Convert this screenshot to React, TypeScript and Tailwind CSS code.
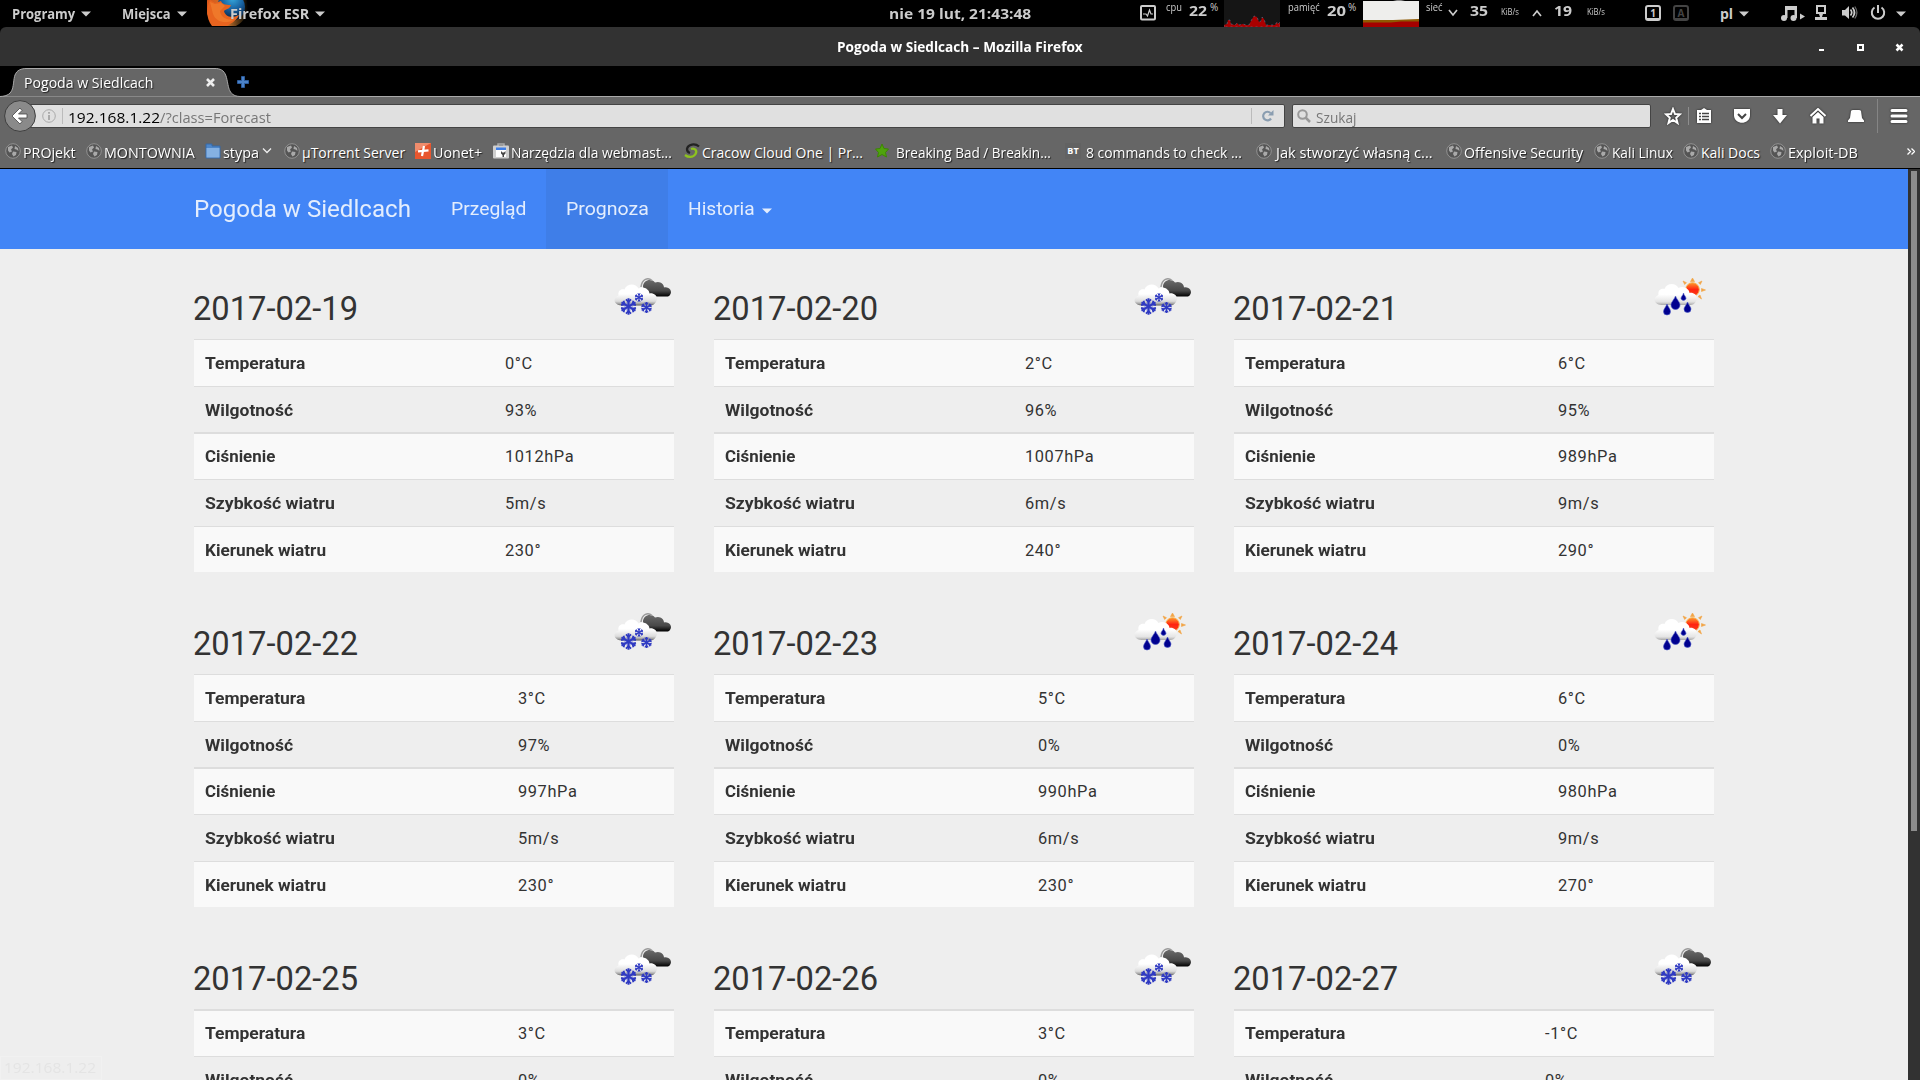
import React from "react";

const ui = "font-['Open_Sans',sans-serif]";

type Kind = "snow" | "rain";
type Day = { date: string; kind: Kind; split: string; values: string[] };

/* Row captions with their drawn widths in pixels. */
const labels: [string, number][] = [
  ["Temperatura", 100],
  ["Wilgotność", 88.5],
  ["Ciśnienie", 70],
  ["Szybkość wiatru", 130],
  ["Kierunek wiatru", 121.5],
];

const days: Day[] = [
  { date: "2017-02-19", kind: "snow", split: "w-[311px]", values: ["0°C", "93%", "1012hPa", "5m/s", "230°"] },
  { date: "2017-02-20", kind: "snow", split: "w-[311px]", values: ["2°C", "96%", "1007hPa", "6m/s", "240°"] },
  { date: "2017-02-21", kind: "rain", split: "w-[324px]", values: ["6°C", "95%", "989hPa", "9m/s", "290°"] },
  { date: "2017-02-22", kind: "snow", split: "w-[324px]", values: ["3°C", "97%", "997hPa", "5m/s", "230°"] },
  { date: "2017-02-23", kind: "rain", split: "w-[324px]", values: ["5°C", "0%", "990hPa", "6m/s", "230°"] },
  { date: "2017-02-24", kind: "rain", split: "w-[324px]", values: ["6°C", "0%", "980hPa", "9m/s", "270°"] },
  { date: "2017-02-25", kind: "snow", split: "w-[324px]", values: ["3°C", "0%"] },
  { date: "2017-02-26", kind: "snow", split: "w-[324px]", values: ["3°C", "0%"] },
  { date: "2017-02-27", kind: "snow", split: "w-[311px]", values: ["-1°C", "0%"] },
];

/* Scales a run of text horizontally so that it occupies exactly `width` pixels. */
function Fit({ width, children, className = "" }: { width: number; children: string; className?: string }) {
  const ref = React.useRef<HTMLSpanElement>(null);
  const [scale, setScale] = React.useState(1);
  React.useLayoutEffect(() => {
    if (ref.current) setScale(width / ref.current.offsetWidth);
  }, [width]);
  return (
    <span className={`inline-block shrink-0 whitespace-nowrap ${className}`} style={{ width }}>
      <span ref={ref} className="inline-block origin-left" style={{ transform: `scaleX(${scale})` }}>{children}</span>
    </span>
  );
}

function Caret({ className = "" }: { className?: string }) {
  return (
    <svg width="10" height="6" viewBox="0 0 10 6" className={className}>
      <path d="M0 0.5h10L5 5.5z" fill="currentColor" />
    </svg>
  );
}

function Flake({ x, y, s }: { x: number; y: number; s: number }) {
  return (
    <g transform={`translate(${x} ${y}) scale(${s})`} stroke="#2f3ac2" fill="none">
      <circle r="4.500" fill="#8f96e0" stroke="none" opacity="0.6" />
      <path d="M0-8V8M-6.900-4L6.900 4M-6.900 4L6.900-4" strokeWidth="2" />
      <path d="M-2.500-7L0-4.500 2.500-7M-2.500 7L0 4.500 2.500 7M-7.300-1.300L-3.900-2.200-4.800-5.600M7.300-1.300L3.900-2.200 4.800-5.600M-7.300 1.300L-3.900 2.200-4.800 5.600M7.300 1.300L3.900 2.200 4.800 5.600" strokeWidth="1.800" />
    </g>
  );
}

function WeatherIcon({ kind }: { kind: Kind }) {
  const cloud = "M8 24C1 24-2 17 5 14C4 9 8 7 11 8C13 2 22 1 25 7C30 4 36 8 36 12C41 11 46 16 42 21C41 23 39 24 37 24Z";
  return (
    <svg width="60" height="40" viewBox="0 0 60 40">
      <defs>
        <linearGradient id="white-cloud" x1="0" y1="0" x2="0" y2="1">
          <stop offset="0.45" stopColor="#fff" />
          <stop offset="0.8" stopColor="#dcdcdc" />
          <stop offset="0.93" stopColor="#9a9a9a" />
          <stop offset="1" stopColor="#555" />
        </linearGradient>
        <linearGradient id="light-cloud" x1="0" y1="0" x2="0" y2="1">
          <stop offset="0.5" stopColor="#fff" />
          <stop offset="0.85" stopColor="#e4e4e4" />
          <stop offset="1" stopColor="#a8a8a8" />
        </linearGradient>
        <linearGradient id="dark-cloud" x1="0" y1="0" x2="0" y2="1">
          <stop offset="0" stopColor="#6a6a6a" />
          <stop offset="0.65" stopColor="#484848" />
          <stop offset="1" stopColor="#000" />
        </linearGradient>
        <linearGradient id="sun" x1="0" y1="0" x2="0" y2="1">
          <stop offset="0" stopColor="#ff9a2b" />
          <stop offset="0.5" stopColor="#ff2410" />
          <stop offset="1" stopColor="#f8401c" />
        </linearGradient>
      </defs>
      {kind === "snow" ? (
        <g>
          <path d="M29 10C29 3 37 1 41 5.500C46 3.500 50 7 50 10.500C55 9.500 59 14 56 18C55 19.500 54 19.500 53 19.500H39C35 18 31 14 29 10Z" fill="url(#dark-cloud)" />
          <path d="M27 10C28 2 34 0 38 3.500" fill="none" stroke="#9a9a9a" strokeWidth="1.500" />
          <g transform="translate(-0.500 4.500)"><path d={cloud} fill="url(#white-cloud)" /></g>
          <Flake x={14.5} y={29.5} s={1.02} />
          <Flake x={25} y={20.5} s={0.55} />
          <Flake x={32.5} y={30.5} s={0.7} />
        </g>
      ) : (
        <g>
          <path d="M38.500 1L40.500 4.500H36.500ZM48 4L46.300 7.500 44.500 5.700ZM51.500 13L47.500 14.500V11.500ZM47.500 22L44 19.500 46 18ZM29 4L32.500 5.700 30.700 7.500ZM26.500 12.500L29.500 11.500V14.500Z" fill="#f2a445" stroke="#f2a445" strokeWidth="0.600" />
          <circle cx="38.500" cy="12.500" r="6.800" fill="url(#sun)" stroke="#f9b04a" strokeWidth="1" />
          <g transform="translate(-0.500 4)"><path d={cloud} fill="url(#light-cloud)" /></g>
          <g transform="translate(0 1)" fill="#00008f" stroke="#4858c8" strokeWidth="0.6">
            <path d="M21.500 18C23 22 26 24 26 27A4.500 4.500 0 0 1 17 27C17 24 20 22 21.500 18Z" />
            <path d="M13 26C14 29 16.500 31 16.500 33.500A3.500 3.500 0 0 1 9.500 33.500C9.500 31 12 29 13 26Z" />
            <path d="M33.500 24C34.500 27 37 29 37 31A3.500 3.500 0 0 1 30 31C30 29 32.500 27 33.500 24Z" />
            <path d="M29.500 15C30 17.500 32 18.500 32 20.500A2.600 2.600 0 0 1 27 20.500C27 18.500 29 17.500 29.500 15Z" />
          </g>
        </g>
      )}
    </svg>
  );
}

function Card({ day, last }: { day: Day; last: boolean }) {
  const first = last ? "h-[47px] border-t-2 pt-[2px]" : "h-[47px] border-t pt-[2px]";
  const rows = [first, "h-[46px] border-t pt-[3px]", "h-[47px] border-t-2 pt-[2px]", "h-[47px] border-t pt-[2px]", "h-[46px] border-t pt-[3px]"];
  return (
    <section className="h-[335px] w-[480px] shrink-0">
      <div className="flex h-[68px] justify-between">
        <h3 className="-ml-px pt-[15px] text-[32.700px] leading-[46px]"><Fit width={165}>{day.date}</Fit></h3>
        <div className="pt-[6px]"><WeatherIcon kind={day.kind} /></div>
      </div>
      {day.values.map((value, i) => (
        <div key={labels[i][0]} className={`flex items-center border-[#ddd] pl-[11px] text-[16.400px] ${rows[i]} ${i % 2 ? "" : "bg-[#f9f9f9]"}`}>
          <div className={`${day.split} -mr-[11px] shrink-0 font-bold`}>
            <Fit width={labels[i][1]}>{labels[i][0]}</Fit>
          </div>
          <span className="tracking-[0.6px]">{value}</span>
        </div>
      ))}
    </section>
  );
}

function Globe() {
  return (
    <svg width="16" height="16" viewBox="0 0 16 16" className="shrink-0">
      <circle cx="8" cy="8" r="7.300" fill="#555" stroke="#929292" />
      <path d="M3 4L7 2.500 8 4.500 6 6.500 7 8.500 4.500 9.500 3 7.500ZM10 3L13 5 13.500 8 11.500 6.500 9.500 6ZM8 8.500L11.500 9 11 12 8.500 13.500 7 11Z" fill="#a9a9a9" />
    </svg>
  );
}

function BookmarkIcon({ type }: { type: string }) {
  if (type === "folder")
    return (
      <svg width="16" height="16" viewBox="0 0 16 16" className="shrink-0">
        <path d="M1 1H7V3H15V15H1Z" fill="#4d86c9" stroke="#3768a5" />
        <path d="M1.500 5H14.500V14.500H1.500Z" fill="#85b1e2" />
      </svg>
    );
  if (type === "plus")
    return (
      <svg width="16" height="16" viewBox="0 0 16 16" className="shrink-0">
        <path d="M0 0H16V16H0Z" fill="#e8562e" />
        <path d="M0 0H16L0 9Z" fill="#f08c6c" />
        <path d="M9 3L7 13M3 8.300L13.500 7.300" stroke="#fff" strokeWidth="2.200" />
      </svg>
    );
  if (type === "tools")
    return (
      <svg width="16" height="16" viewBox="0 0 16 16" className="shrink-0">
        <path d="M5 3V1H11V3" fill="none" stroke="#aaa" strokeWidth="1.500" />
        <rect y="2.500" width="16" height="13" rx="1" fill="#cfcfcf" />
        <path d="M3 4.500H13V7H3Z" fill="#3f7fe8" />
        <path d="M3 7H13V14H3Z" fill="#fff" />
        <path d="M8 8V10.500L9.500 12V14H11V12L12.500 10.500V8L11 9.500H9.500Z" fill="#444" />
      </svg>
    );
  if (type === "swirl")
    return (
      <svg width="16" height="16" viewBox="0 0 16 16" className="shrink-0" fill="none" strokeWidth="2.300">
        <path d="M15 3.500C11 0 4 1 3 6C3 8.500 4.500 9.500 6 10" stroke="#222" />
        <path d="M7 6C11 4.500 13.500 8 11.500 11C9 15 4 14.500 1 12" stroke="#8dc21f" />
      </svg>
    );
  if (type === "star")
    return (
      <svg width="16" height="16" viewBox="0 0 16 16" className="shrink-0">
        <path d="M7 1L9 5.500 13.500 6 10.500 9.500 11.500 14 7 11.500 2.500 14 3.500 9.500 0.500 6 5 5.500Z" fill="#4fa30d" stroke="#3d8605" />
      </svg>
    );
  if (type === "bt")
    return <span className="flex h-4 w-4 shrink-0 items-center justify-center bg-[#626262] text-[9px] font-bold">BT</span>;
  return <Globe />;
}

type Bookmark = { cell: string; icon: string; gap: string; title: string; width: number };

const bookmarks: Bookmark[] = [
  { cell: "w-[81px]", icon: "globe", gap: "ml-[2px]", title: "PROjekt", width: 53 },
  { cell: "w-[119px]", icon: "globe", gap: "ml-[2px]", title: "MONTOWNIA", width: 91 },
  { cell: "w-[79px]", icon: "folder", gap: "ml-[2px]", title: "stypa", width: 36 },
  { cell: "w-[131px]", icon: "globe", gap: "ml-[2px]", title: "µTorrent Server", width: 103 },
  { cell: "w-[78px]", icon: "plus", gap: "ml-[2px]", title: "Uonet+", width: 49 },
  { cell: "w-[191px]", icon: "tools", gap: "ml-[2px]", title: "Narzędzia dla webmast...", width: 161 },
  { cell: "w-[191px]", icon: "swirl", gap: "ml-[2px]", title: "Cracow Cloud One | Pr...", width: 161 },
  { cell: "w-[190px]", icon: "star", gap: "ml-[5px]", title: "Breaking Bad / Breakin...", width: 155 },
  { cell: "w-[191px]", icon: "bt", gap: "ml-[5px]", title: "8 commands to check ...", width: 156 },
  { cell: "w-[190px]", icon: "globe", gap: "ml-[4px]", title: "Jak stworzyć własną c...", width: 157 },
  { cell: "w-[148px]", icon: "globe", gap: "ml-[2px]", title: "Offensive Security", width: 119.5 },
  { cell: "w-[89px]", icon: "globe", gap: "ml-[2px]", title: "Kali Linux", width: 60.5 },
  { cell: "w-[87px]", icon: "globe", gap: "ml-[2px]", title: "Kali Docs", width: 59 },
  { cell: "w-[120px]", icon: "globe", gap: "ml-[2px]", title: "Exploit-DB", width: 70 },
];

function TopBar() {
  return (
    <header className={`flex h-[27px] w-full items-start overflow-hidden bg-black text-[14px] font-bold leading-[28px] text-[#ccc] ${ui}`}>
      <div className="flex w-[110px] items-start pl-3">
        <Fit width={63}>Programy</Fit>
        <Caret className="ml-[6px] mt-[11px]" />
      </div>
      <div className="flex w-[97px] items-start pl-3">
        <Fit width={49}>Miejsca</Fit>
        <Caret className="ml-[6px] mt-[11px]" />
      </div>
      <div className="flex w-[682px] items-start">
        <svg width="42" height="26" viewBox="0 0 42 26" className="-mr-[19px] shrink-0">
          <defs>
            <radialGradient id="planet" cx="0.55" cy="0.2" r="0.8"><stop offset="0" stopColor="#36a8dc" /><stop offset="0.5" stopColor="#175f9e" /><stop offset="1" stopColor="#071830" /></radialGradient>
            <linearGradient id="tail" x1="0" y1="0" x2="1" y2="0"><stop offset="0" stopColor="#dd5518" /><stop offset="0.5" stopColor="#c8742d" /><stop offset="0.85" stopColor="#33240e" /><stop offset="1" stopColor="#000" /></linearGradient>
          </defs>
          <circle cx="20" cy="7" r="21" fill="url(#tail)" />
          <circle cx="24" cy="7" r="14" fill="url(#planet)" />
          <path d="M3 0L8 3 14 1C15 4 18 5 24 5C23 9 19 9 17 11C18 16 24 19 32 15C29 22 22 24 20 26H5C-1 18-1 8 3 0Z" fill="#e8641f" />
          <path d="M3 2L8 4 14 3 18 6 13 11C14 18 21 21 28 19C19 25 9 22 6 14Z" fill="#f38532" opacity="0.6" />
        </svg>
        <Fit width={79} className="relative">Firefox ESR</Fit>
        <Caret className="ml-[6px] mt-[11px]" />
      </div>
      <div className="w-[251px]"><Fit width={142}>nie 19 lut, 21:43:48</Fit></div>
      <svg width="16" height="16" viewBox="0 0 16 16" className="mt-[5px] shrink-0" fill="none" stroke="#ccc">
        <rect x="1" y="1" width="14" height="13.500" rx="1" strokeWidth="2" />
        <path d="M3 9H6L7.500 11 9.500 5 11 9H13" strokeWidth="1.200" />
      </svg>
      <span className="ml-[10px] w-[23px] text-[10.500px] font-normal leading-[15px]"><Fit width={16}>cpu</Fit></span>
      <span className="w-[21px] leading-[22px]"><Fit width={18}>22</Fit></span>
      <span className="w-[15px] text-[10px] font-normal leading-[15px]">%</span>
      <svg width="56" height="27" viewBox="0 0 56 27" className="-ml-[1px] shrink-0">
        <path d="M0 0H56V27H0Z" fill="#151515" />
        <path d="M0 27V25L3 24 4 20 6 20 7 24 11 25 13 23 15 25 19 24 22 25 25 25 28 19 30 16 33 17 35 22 37 21 38 17 40 19 42 25 48 25 51 25 53 22 54 24 56 22V27Z" fill="#a00" stroke="#4f7fa0" strokeWidth="0.6" strokeDasharray="2 3" />
      </svg>
      <span className="ml-[8px] w-[39px] text-[10.500px] font-normal leading-[15px]"><Fit width={32}>pamięć</Fit></span>
      <span className="w-[21px] leading-[22px]"><Fit width={19}>20</Fit></span>
      <span className="w-[15px] text-[10px] font-normal leading-[15px]">%</span>
      <svg width="56" height="27" viewBox="0 0 56 27" className="shrink-0">
        <path d="M0 1H56V27H0Z" fill="#eeeeec" />
        <path d="M30 1H42L38 0H34Z" fill="#888" />
        <path d="M0 20H30L56 19V27H0Z" fill="#8f5902" />
        <path d="M0 22.500L28 22.500 38 21.500H56V27H0Z" fill="#a40000" />
      </svg>
      <span className="ml-[7px] w-[22px] text-[10.500px] font-normal leading-[15px]"><Fit width={17}>sieć</Fit></span>
      <svg width="10" height="8" viewBox="0 0 10 8" className="mt-[9px] shrink-0" fill="none" stroke="#ccc" strokeWidth="1.700"><path d="M1 1L5 6 9 1" /></svg>
      <span className="ml-[12px] w-[31px] leading-[22px]"><Fit width={18}>35</Fit></span>
      <span className="w-[31px] text-[8.500px] font-normal leading-[24px]"><Fit width={18}>KiB/s</Fit></span>
      <svg width="10" height="8" viewBox="0 0 10 8" className="mt-[9px] shrink-0" fill="none" stroke="#ccc" strokeWidth="1.700"><path d="M1 7L5 2 9 7" /></svg>
      <span className="ml-[12px] w-[33px] leading-[22px]"><Fit width={18}>19</Fit></span>
      <span className="w-[58px] text-[8.500px] font-normal leading-[24px]"><Fit width={18}>KiB/s</Fit></span>
      <span className="mt-[5px] flex h-4 w-4 shrink-0 items-center justify-center rounded-[3px] border-2 border-b-[3px] border-[#ccc] text-[10px] leading-none">1</span>
      <span className="ml-3 mt-[5px] flex h-4 w-4 shrink-0 items-center justify-center rounded-[3px] border-2 border-b-[3px] border-[#444] text-[10px] leading-none text-[#444]">A</span>
      <span className="ml-[31px]"><Fit width={13}>pl</Fit></span>
      <Caret className="ml-[6px] mt-[11px] shrink-0" />
      <svg width="24" height="16" viewBox="0 0 24 16" className="ml-[32px] mt-[5px] shrink-0" fill="#ccc">
        <circle cx="3" cy="13" r="3" /><circle cx="12.500" cy="13" r="3" />
        <path d="M4 1H16V13H13.500V5H6.500V13H4ZM19 8.500L24 11.500 19 14.500Z" />
      </svg>
      <svg width="12" height="15" viewBox="0 0 12 15" className="ml-[10px] mt-[5px] shrink-0" fill="#ccc">
        <path fillRule="evenodd" d="M1 0H11V9H8L7 12H12V15H0V12H5L4 9H1ZM3 2V7H9V2Z" />
      </svg>
      <svg width="16" height="14" viewBox="0 0 16 14" className="ml-[15px] mt-[6px] shrink-0" fill="#ccc">
        <path d="M0 4H3L7 0V13L3 9.500H0Z" />
        <path d="M8.500 3.500Q11 6.500 8.500 9.500M10.500 1.500Q14.500 6.500 10.500 11.500" fill="none" stroke="#ccc" strokeWidth="1.700" />
        <path d="M12.800 0.500Q17 6.500 12.800 12.500" fill="none" stroke="#666" strokeWidth="1.300" />
      </svg>
      <svg width="16" height="16" viewBox="0 0 16 16" className="ml-[12px] mt-[5px] shrink-0" fill="none" stroke="#ccc" strokeWidth="2">
        <path d="M8 0V8M4.500 2.500A6.200 6.200 0 1 0 11.500 2.500" />
      </svg>
      <Caret className="ml-[10px] mt-[11px] shrink-0" />
    </header>
  );
}

function TitleBar() {
  return (
    <div className="bg-black">
      <div className={`flex h-[39px] items-center rounded-t-[6px] bg-[#323232] pl-[837px] text-[14px] font-bold text-white ${ui}`}>
        <Fit width={246} className="-mt-[1px]">Pogoda w Siedlcach – Mozilla Firefox</Fit>
        <svg width="86" height="10" viewBox="0 0 86 10" className="ml-[736px]" fill="#fff">
          <path d="M0 7H5V9H0ZM38 2H45V9H38ZM40 4V7H43V4Z" fillRule="evenodd" />
          <path d="M77.500 2.500L83.500 8.500M83.500 2.500L77.500 8.500" stroke="#fff" strokeWidth="2.500" />
        </svg>
      </div>
    </div>
  );
}

function TabStrip() {
  return (
    <div className={`relative h-[31px] bg-black text-[14px] text-white ${ui}`}>
      <svg width="1920" height="31" viewBox="0 0 1920 31" className="absolute left-0 top-0">
        <path d="M0 30.500C16 30 12 18 15 9C17 4 21 2.500 27 2.500H215C220 2.500 224 4 226 10C229 19 227 30 240 30.500H1920V31H0Z" fill="#666" stroke="#aaa" />
      </svg>
      <div className="relative flex h-[31px] items-center pl-6">
        <Fit width={129} className="mt-[2px] [text-shadow:1px_1px_1px_#222]">Pogoda w Siedlcach</Fit>
        <svg width="9" height="9" viewBox="0 0 9 9" className="ml-[53px] mt-px" stroke="#eee" strokeWidth="2.600"><path d="M1 1L8 8M8 1L1 8" /></svg>
        <svg width="12" height="12" viewBox="0 0 12 12" className="ml-[22px] mt-px"><path d="M4.500 0.500H7.500V4.500H11.500V7.500H7.500V11.500H4.500V7.500H0.500V4.500H4.500Z" fill="#4b82c8" stroke="#2b5b9c" /></svg>
      </div>
    </div>
  );
}

const iconShadow = "shrink-0 drop-shadow-[0_0_1px_#222]";

function AddressBar() {
  return (
    <div className={`flex h-[38px] items-center bg-[#666] text-[14px] ${ui}`}>
      <svg width="32" height="32" viewBox="0 0 32 32" className="relative z-10 ml-1 shrink-0">
        <circle cx="16" cy="16" r="15.400" fill="#8a8a8a" stroke="#3e3e3e" />
        <path d="M8 16L16 8 18 10.500 14.500 14H23V18H14.500L18 21.500 16 24Z" fill="#fff" stroke="#444" strokeWidth="0.800" />
      </svg>
      <div className="-ml-2 flex h-6 w-[1257px] shrink-0 items-center rounded-[2px] border border-[#444] bg-[#e0e0e0] text-[#777]">
        <svg width="14" height="14" viewBox="0 0 14 14" className="ml-[13px]" fill="none" stroke="#aaa"><circle cx="7" cy="7" r="6.300" /><path d="M7 6V11M7 3V4.800" strokeWidth="2" /></svg>
        <span className="ml-[6px] mr-[5px] h-4 w-px bg-[#bbb]" />
        <Fit width={92} className="mt-[2px] text-black">192.168.1.22</Fit>
        <Fit width={111} className="mt-[2px]">/?class=Forecast</Fit>
        <span className="ml-auto mr-[9px] h-4 w-px bg-[#bbb]" />
        <svg width="14" height="14" viewBox="0 0 14 14" className="mr-[9px]"><path d="M10 9.500A4.300 4.300 0 1 1 9.500 4" fill="none" stroke="#8a9db0" strokeWidth="2.200" /><path d="M12.500 1V6.500H7Z" fill="#8a9db0" /></svg>
      </div>
      <div className="ml-[7px] flex h-6 w-[359px] shrink-0 items-center rounded-[2px] border border-[#444] bg-[#e0e0e0] text-[#777]">
        <svg width="14" height="14" viewBox="0 0 14 14" className="ml-1 mr-[5px]" fill="none" stroke="#999"><circle cx="5.500" cy="5.500" r="4.300" strokeWidth="2" /><path d="M8.500 8.500L13 13" strokeWidth="2.500" /></svg>
        <Fit width={41} className="mt-[2px]">Szukaj</Fit>
      </div>
      <svg width="18" height="18" viewBox="0 0 18 18" className={`ml-[13px] ${iconShadow}`}><path d="M9 2L11 7 16 7.300 12.200 10.800 13.500 16 9 13 4.500 16 5.800 10.800 2 7.300 7 7Z" fill="none" stroke="#fff" strokeWidth="2" /></svg>
      <span className="ml-[6px] h-[18px] w-px shrink-0 bg-[#8e8e8e]" />
      <svg width="16" height="16" viewBox="0 0 16 16" className={`ml-[7px] ${iconShadow}`}><path d="M5 2L8 0 11 2H15V15H1V2Z" fill="#fff" /><path d="M3 5.500H5M6 5.500H13M3 8.500H5M6 8.500H13M3 11.500H5M6 11.500H13" stroke="#444" strokeWidth="1.300" /></svg>
      <svg width="18" height="16" viewBox="0 0 18 16" className={`ml-[21px] ${iconShadow}`}><path d="M1 1H17V8C16 17 2 17 1 8Z" fill="#fff" /><path d="M5 6L9 10 13 6" fill="none" stroke="#444" strokeWidth="2" /></svg>
      <svg width="16" height="16" viewBox="0 0 16 16" className={`ml-[21px] ${iconShadow}`}><path d="M5.500 1H10.500V7H15L8 15.500 1 7H5.500Z" fill="#fff" /></svg>
      <svg width="16" height="16" viewBox="0 0 16 16" className={`ml-[22px] ${iconShadow}`}><path d="M0.500 8L8 1 15.500 8" fill="none" stroke="#fff" strokeWidth="2" /><path d="M2.500 9L8 4 13.500 9V15.500H9.500V10.500H6.500V15.500H2.500Z" fill="#fff" /></svg>
      <svg width="18" height="14" viewBox="0 0 18 14" className={`ml-[21px] ${iconShadow}`}><path d="M4 2Q4.500 1 6 1H12Q13.500 1 14 2L15 9 17 11.500V13H1V11.500L3 9Z" fill="#fff" /></svg>
      <span className="ml-[12px] h-[34px] w-px shrink-0 bg-[#858585]" />
      <svg width="18" height="16" viewBox="0 0 18 16" className={`ml-[12px] ${iconShadow}`}><path d="M2 2.500H16M2 8H16M2 13.500H16" stroke="#fff" strokeWidth="3" strokeLinecap="round" /></svg>
    </div>
  );
}

function BookmarksBar() {
  return (
    <div className={`flex h-[34px] items-center border-b border-black bg-[#666] pl-[5px] pb-[1px] text-[14px] text-white ${ui}`}>
      {bookmarks.map(({ cell, icon, gap, title, width }) => (
        <div key={title} className={`flex shrink-0 items-center ${cell}`}>
          <BookmarkIcon type={icon} />
          <Fit width={width} className={`mt-[3px] [text-shadow:1px_1px_1px_#222] ${gap}`}>{title}</Fit>
          {icon === "folder" && <svg width="10" height="6" viewBox="0 0 10 6" className="ml-[3px]" fill="none" stroke="#eee" strokeWidth="1.300"><path d="M1 0.500L5 4.500 9 0.500" /></svg>}
        </div>
      ))}
      <svg width="8" height="7" viewBox="0 0 8 7" className="ml-auto mr-[5px]" fill="none" stroke="#fff" strokeWidth="1.300"><path d="M0.500 0.500L3.500 3.500 0.500 6.500M4.500 0.500L7.500 3.500 4.500 6.500" /></svg>
    </div>
  );
}

function Nav() {
  return (
    <nav className="flex h-20 bg-[#4285f6] pl-[194px] text-[18.700px] leading-[80px] text-[#e3edfd]">
      <a className="w-[237px] text-[24px]"><Fit width={217}>Pogoda w Siedlcach</Fit></a>
      <a className="w-[115px] pl-5"><Fit width={75.5}>Przegląd</Fit></a>
      <a className="w-[122px] bg-[#3f7ee8] pl-5"><Fit width={82.5}>Prognoza</Fit></a>
      <a className="flex items-center pl-5"><Fit width={66.5}>Historia</Fit><Caret className="ml-[7px] mt-[4px]" /></a>
    </nav>
  );
}

export default function App() {
  return (
    <div className="flex h-[1080px] w-[1920px] flex-col overflow-hidden bg-[#eee]">
      <TopBar />
      <TitleBar />
      <TabStrip />
      <AddressBar />
      <BookmarksBar />
      <div className="flex h-[911px] shrink-0 overflow-hidden">
        <main className="relative w-[1908px] bg-[#eee] font-['Roboto',sans-serif] text-[#333]">
          <Nav />
          <div className="flex flex-wrap gap-x-10 pl-[194px] pt-[22px]">
            {days.map((day, i) => <Card key={day.date} day={day} last={i > 5} />)}
          </div>
          <div className={`absolute bottom-0 left-0 h-6 w-[102px] border border-[#f1f1f1] pl-[3px] text-[14px] leading-[22px] text-[#e4e4e4] ${ui}`}>
            <Fit width={92}>192.168.1.22</Fit>
          </div>
        </main>
        <aside className="w-3 bg-[#323232] pl-[3px] pt-[2px]">
          <div className="h-[660px] w-[6px] bg-[#8c8c8c]" />
        </aside>
      </div>
    </div>
  );
}
